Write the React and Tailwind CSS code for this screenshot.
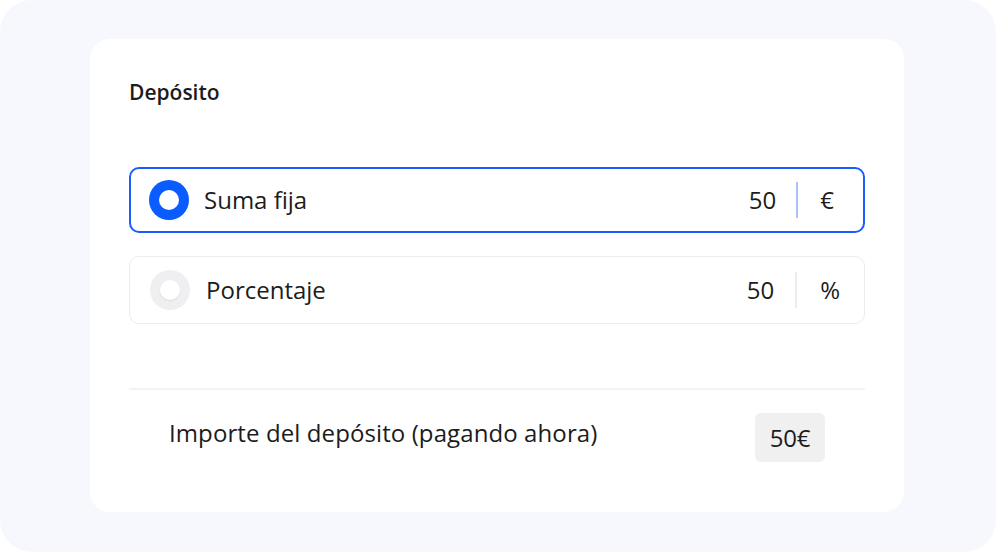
export default function App() {
  return (
    <div
      className="h-[552px] w-[996px] bg-white"
      style={{ fontFamily: '"Open Sans", sans-serif' }}
    >
      <div className="flex h-full w-full items-start rounded-[32px] bg-[#f7f8fe] pl-[90px] pt-[39px]">
        <div className="h-[473px] w-[814px] rounded-[20px] bg-white px-[39px] pt-[43px]">
          <h2 className="text-[21px] font-semibold leading-none text-[#1c1c1c]">
            Depósito
          </h2>

          <div className="mt-[64px] flex flex-col gap-[23px]">
            <div className="flex h-[66px] items-center rounded-[10px] border-2 border-[#1a5cff] pl-[18px] pr-[29px]">
              <span className="flex h-[40px] w-[40px] items-center justify-center rounded-full bg-[#0a5cff]">
                <span className="h-[20px] w-[20px] rounded-full bg-white" />
              </span>
              <span className="ml-[15px] text-[24px] text-[#1c1c1c]">Suma fija</span>
              <span className="ml-auto text-[24px] text-[#1c1c1c]">50</span>
              <span className="ml-[20px] h-[36px] w-[2px] bg-[#a9c1fb]" />
              <span className="ml-[22px] text-[24px] text-[#1c1c1c]">€</span>
            </div>

            <div className="flex h-[68px] items-center rounded-[10px] border border-[#ececec] pl-[20px] pr-[24px]">
              <span className="flex h-[40px] w-[40px] items-center justify-center rounded-full bg-[#efeff2]">
                <span className="h-[20px] w-[20px] rounded-full bg-white shadow-[0_1px_2px_rgba(0,0,0,0.08)]" />
              </span>
              <span className="ml-[16px] text-[24px] text-[#1c1c1c]">Porcentaje</span>
              <span className="ml-auto text-[24px] text-[#1c1c1c]">50</span>
              <span className="ml-[21px] h-[36px] w-[2px] bg-[#ececec]" />
              <span className="ml-[23px] text-[24px] text-[#1c1c1c]">%</span>
            </div>
          </div>

          <div className="mt-[64px] h-[2px] w-full bg-[#f3f3f3]" />

          <div className="flex items-start justify-between pl-[40px] pr-[40px] pt-[23px]">
            <span className="mt-[2px] text-[24px] tracking-[0.1px] text-[#1c1c1c]">
              Importe del depósito (pagando ahora)
            </span>
            <span className="flex h-[49px] w-[70px] items-center justify-center rounded-[6px] bg-[#f0f0f0] text-[24px] tracking-[-0.3px] text-[#1c1c1c]">
              50€
            </span>
          </div>
        </div>
      </div>
    </div>
  );
}
